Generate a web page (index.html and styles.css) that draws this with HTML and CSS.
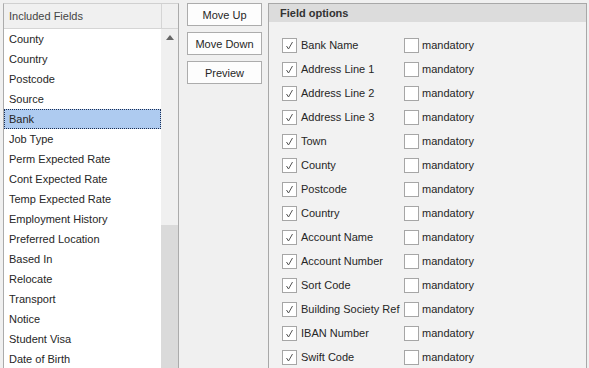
FILE: index.html
```html
<!DOCTYPE html>
<html lang="en">
<head>
  <meta charset="UTF-8">
  <title>Field Setup</title>
  <link rel="stylesheet" href="styles.css">
</head>
<body>
  <div class="layout">
    <div class="fields-panel">
      <div class="fields-head">Included Fields</div>
      <div class="scroll-head"></div>
      <ul class="fields-list">
        <li>County</li>
        <li>Country</li>
        <li>Postcode</li>
        <li>Source</li>
        <li class="selected">Bank</li>
        <li>Job Type</li>
        <li>Perm Expected Rate</li>
        <li>Cont Expected Rate</li>
        <li>Temp Expected Rate</li>
        <li>Employment History</li>
        <li>Preferred Location</li>
        <li>Based In</li>
        <li>Relocate</li>
        <li>Transport</li>
        <li>Notice</li>
        <li>Student Visa</li>
        <li>Date of Birth</li>
      </ul>
      <div class="scrollbar">
        <div class="track"><span class="arrow-up"></span></div>
        <div class="thumb"></div>
      </div>
    </div>

    <div class="actions">
      <button>Move Up</button>
      <button>Move Down</button>
      <button>Preview</button>
    </div>

    <div class="options">
      <div class="options-head">Field options</div>
      <div class="options-body" id="options-body"></div>
    </div>
  </div>

  <script>
    const campos = [
      'Bank Name', 'Address Line 1', 'Address Line 2', 'Address Line 3', 'Town',
      'County', 'Postcode', 'Country', 'Account Name', 'Account Number',
      'Sort Code', 'Building Society Ref', 'IBAN Number', 'Swift Code'
    ];

    const check = '<svg width="13" height="13" viewBox="0 0 13 13"><path d="M3.5 7 L5.5 10 L9.5 3" fill="none" stroke="#555" stroke-width="1"/></svg>';

    function montarOpcoes() {
      const corpo = document.getElementById('options-body');
      campos.forEach(nome => {
        const row = document.createElement('div');
        row.className = 'option-row';
        row.innerHTML = `
          <span class="box">${check}</span>
          <span class="option-name">${nome}</span>
          <span class="box"></span>
          <span class="option-flag">mandatory</span>
        `;
        corpo.appendChild(row);
      });
    }

    montarOpcoes();
  </script>
</body>
</html>
```

FILE: styles.css
```css
body {
  margin: 0;
  height: 368px;
  overflow: hidden;
  background-color: #f0f0f0;
  font-family: "Liberation Sans", Arial, sans-serif;
  font-size: 11px;
  color: #262626;
}

.layout {
  display: flex;
  align-items: flex-start;
  padding: 3px 0 0 3px;
}

/* lista de campos */
.fields-panel {
  display: grid;
  grid-template-columns: 157px 17px;
  grid-template-rows: 24px 1fr;
  width: 174px;
  height: 380px;
  border: 1px solid #ababab;
  border-top-color: #d0d0d0;
  background: #fff;
}

.fields-head {
  display: flex;
  align-items: center;
  padding-left: 5px;
  background: #f0f0f0;
  border-bottom: 1px solid #d5d5d5;
  color: #444;
  height: 24px;
}

.scroll-head {
  background: #f0f0f0;
  border-bottom: 1px solid #d5d5d5;
  border-left: 1px solid #d5d5d5;
  height: 24px;
}

.fields-list {
  list-style: none;
  margin: 1px 0 0;
  padding: 0;
}

.fields-list li {
  height: 20px;
  line-height: 20px;
  padding-left: 5px;
}

.fields-list li.selected {
  background: #aecbf0;
  outline: 1px dotted #1c2f55;
  outline-offset: -1px;
}

.scrollbar {
  display: flex;
  flex-direction: column;
  margin-top: 1px;
}

.track {
  height: 196px;
  background: #f0f0f0;
  display: flex;
  justify-content: center;
  padding-top: 6px;
  box-sizing: border-box;
}

.arrow-up {
  width: 0;
  height: 0;
  border-left: 4px solid transparent;
  border-right: 4px solid transparent;
  border-bottom: 5px solid #666;
}

.thumb {
  flex: 1;
  background: #dadada;
}

/* botoes */
.actions {
  display: flex;
  flex-direction: column;
  gap: 6px;
  margin-left: 8px;
  width: 75px;
}

button {
  height: 23px;
  padding: 0;
  font-family: inherit;
  font-size: 11px;
  color: #262626;
  background: #fdfdfd;
  border: 1px solid #acacac;
}

/* opcoes */
.options {
  margin-left: 6px;
  width: 317px;
  height: 380px;
  border: 1px solid #a8a8a8;
  background: #f2f2f2;
}

.options-head {
  height: 18px;
  line-height: 18px;
  padding-left: 11px;
  background: #dcdcdc;
  font-weight: bold;
  color: #333;
}

.options-body {
  padding: 11px 0 0 13px;
}

.option-row {
  display: flex;
  align-items: center;
  height: 24px;
}

.box {
  width: 13px;
  height: 13px;
  border: 1px solid #a6a6a6;
  background: #fff;
  flex-shrink: 0;
}

.box svg {
  display: block;
}

.option-name {
  width: 103px;
  padding-left: 4px;
  white-space: nowrap;
}

.option-flag {
  padding-left: 3px;
}
```
